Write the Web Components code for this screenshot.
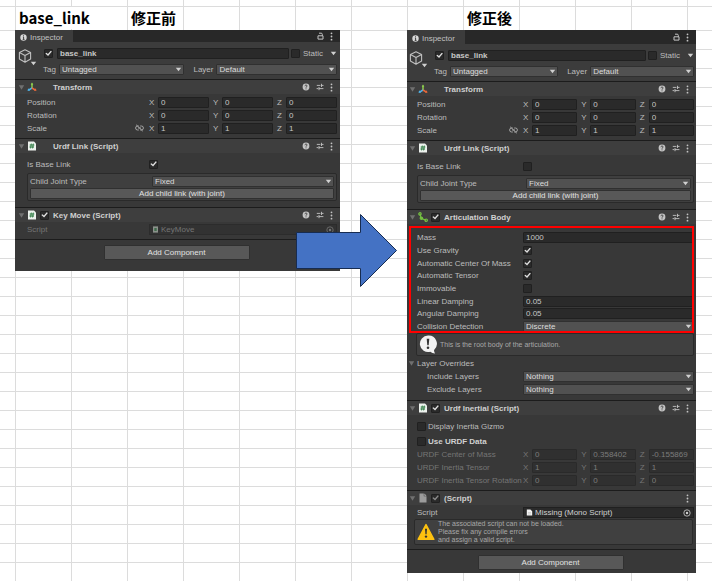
<!DOCTYPE html>
<html lang="ja">
<head>
<meta charset="utf-8">
<title>base_link</title>
<style>
  html, body { margin: 0; min-height: 100%; }
  body { background: #fff; }
  .before { --label: 122px; --tab: 12px; --inset: 12px; --edge: 3px; --lead: 3px; --foot: 11px; }
  .after { --label: 106px; --tab: 14px; --inset: 10px; --edge: 2px; --lead: 2px; --foot: 3px; }
</style>
</head>
<body>
<sheet-page>
  <sheet-heading slot="before"><span>base_link</span><span slot="note">修正前</span></sheet-heading>
  <sheet-heading slot="after"><span slot="note">修正後</span></sheet-heading>

  <inspector-panel slot="left" class="before">
    <object-header></object-header>
    <component-section icon="axes" heading="Transform" tools class="transform">
      <vector-row label="Position" x="0" y="0" z="0"></vector-row>
      <vector-row label="Rotation" x="0" y="0" z="0"></vector-row>
      <vector-row label="Scale" x="1" y="1" z="1" linked></vector-row>
    </component-section>
    <component-section icon="script" heading="Urdf Link (Script)" tools class="link">
      <property-row kind="check" label="Is Base Link" checked></property-row>
      <joint-box></joint-box>
    </component-section>
    <component-section icon="script" heading="Key Move (Script)" toggle="on" tools class="script">
      <property-row kind="object" label="Script" value="KeyMove" glyph="scriptSmall" disabled></property-row>
    </component-section>
    <add-component></add-component>
  </inspector-panel>

  <block-arrow slot="middle"></block-arrow>

  <inspector-panel slot="right" class="after">
    <object-header></object-header>
    <component-section icon="axes" heading="Transform" tools class="transform">
      <vector-row label="Position" x="0" y="0" z="0"></vector-row>
      <vector-row label="Rotation" x="0" y="0" z="0"></vector-row>
      <vector-row label="Scale" x="1" y="1" z="1" linked></vector-row>
    </component-section>
    <component-section icon="script" heading="Urdf Link (Script)" tools class="link">
      <property-row kind="check" label="Is Base Link"></property-row>
      <joint-box></joint-box>
    </component-section>
    <component-section icon="joint" heading="Articulation Body" toggle="on" tools class="body">
      <marked-rows>
        <property-row kind="text" label="Mass" value="1000"></property-row>
        <property-row kind="check" label="Use Gravity" checked></property-row>
        <property-row kind="check" label="Automatic Center Of Mass" checked></property-row>
        <property-row kind="check" label="Automatic Tensor" checked></property-row>
        <property-row kind="check" label="Immovable"></property-row>
        <property-row kind="text" label="Linear Damping" value="0.05"></property-row>
        <property-row kind="text" label="Angular Damping" value="0.05"></property-row>
        <property-row kind="select" label="Collision Detection" value="Discrete"></property-row>
      </marked-rows>
      <help-box icon="info" class="info">This is the root body of the articulation.</help-box>
      <foldout-group label="Layer Overrides">
        <property-row kind="select" label="Include Layers" value="Nothing"></property-row>
        <property-row kind="select" label="Exclude Layers" value="Nothing"></property-row>
      </foldout-group>
    </component-section>
    <component-section icon="script" heading="Urdf Inertial (Script)" toggle="on" tools class="inertial">
      <property-row kind="leading" label="Display Inertia Gizmo"></property-row>
      <property-row kind="leading" label="Use URDF Data" strong></property-row>
      <vector-row label="URDF Center of Mass" x="0" y="0.358402" z="-0.155869" disabled></vector-row>
      <vector-row label="URDF Inertia Tensor" x="1" y="1" z="1" disabled></vector-row>
      <vector-row label="URDF Inertia Tensor Rotation" x="0" y="0" z="0" disabled></vector-row>
    </component-section>
    <component-section icon="page" heading="(Script)" toggle="disabled" class="missing">
      <property-row kind="object" label="Script" value="Missing (Mono Script)" glyph="pageSmall"></property-row>
      <help-box icon="warning" class="warning">The associated script can not be loaded.<br>Please fix any compile errors<br>and assign a valid script.</help-box>
    </component-section>
    <add-component></add-component>
  </inspector-panel>
</sheet-page>

<script>
const ICONS = {
  fold: '<svg width="7" height="7" viewBox="0 0 7 7"><path d="M.8 1.2h5.4L3.5 5.8z" fill="#707070"/></svg>',
  caret: '<svg width="7" height="5" viewBox="0 0 7 5"><path d="M.8.7h5.4L3.5 4.2z" fill="#d0d0d0"/></svg>',
  dots: '<svg width="3" height="9" viewBox="0 0 3 9" fill="#c4c4c4"><circle cx="1.5" cy="1.3" r=".9"/><circle cx="1.5" cy="4.5" r=".9"/><circle cx="1.5" cy="7.7" r=".9"/></svg>',
  help: '<svg width="8" height="8" viewBox="0 0 8 8"><circle cx="4" cy="4" r="3.4" fill="#c4c4c4"/><path d="M2.9 3.2c0-1.5 2.2-1.5 2.2-.2C5.1 3.8 4 3.7 4 4.7M4 5.4v.9" fill="none" stroke="#383838" stroke-width=".9"/></svg>',
  preset: '<svg width="8" height="8" viewBox="0 0 8 8" fill="none" stroke="#c4c4c4" stroke-width=".9"><path d="M.8 2.4h3.6M5.5.8v3.2M5.5 2.4h2M.6 5.6h1.7M3 4v3.2M3 5.6h4.4"/></svg>',
  lock: '<svg width="7" height="8" viewBox="0 0 7 8"><path d="M1 3.8h5v3.3H1zM2 1.2h2.2Q5.3 1.2 5.3 2.4v1.4" fill="none" stroke="#c4c4c4"/></svg>',
  infoTab: '<svg width="7" height="7" viewBox="0 0 7 7"><circle cx="3.5" cy="3.5" r="3.2" fill="#d8d8d8"/><path d="M3.5 1.3v1M2.9 3h.7v2.4M2.7 5.4h1.8" fill="none" stroke="#333" stroke-width=".9"/></svg>',
  cube: '<svg width="14" height="14" viewBox="0 0 14 14" fill="none" stroke="#c0c0c0" stroke-width="1.1" stroke-linejoin="round"><path d="M7 .8l5.6 2.7v6.6L7 13.2 1.4 10.1V3.5zM1.4 3.5L7 6.5l5.6-3M7 6.5v6.7"/></svg>',
  axes: '<svg width="10" height="10" viewBox="0 0 10 10" fill="none" stroke-width="1.5"><path d="M5 6V1.5" stroke="#8fd14f"/><path d="M5 6L1.6 8.2" stroke="#4fb3e8"/><path d="M5 6l3.4 2.2" stroke="#e8683a"/><path d="M3.7 2.8L5 .4l1.3 2.4z" fill="#8fd14f"/><path d="M.6 9l.5-2.8 2 2.4z" fill="#4fb3e8"/><path d="M9.400 9l-.5-2.800-2 2.400z" fill="#e8683a"/></svg>',
  script: '<svg width="10" height="10" viewBox="0 0 10 10"><path d="M1 .5h6L9 2.500v7H1z" fill="#eef2ee"/><path d="M4.300 2.600L3.600 7.400M6.300 2.600L5.600 7.400M2.700 4h4.600M2.400 6H7" stroke="#2c7a42" fill="none" stroke-width=".95"/></svg>',
  joint: '<svg width="10" height="10" viewBox="0 0 10 10" fill="none" stroke="#76c442" stroke-width="1.2"><path d="M2 2l1.200 4.300L8 8.200"/><circle cx="2" cy="1.900" r="1.200"/><circle cx="3.400" cy="6.300" r="1.200"/><circle cx="8.200" cy="8.200" r="1.200"/></svg>',
  page: '<svg width="10" height="10" viewBox="0 0 10 10"><path d="M1.500.5h4.300v2.700h2.700v6.300h-7z" fill="#9b9b9b"/><path d="M6.400.6l2.100 2.100H6.400z" fill="#b8b8b8"/></svg>',
  scriptSmall: '<svg width="7" height="7" viewBox="0 0 7 7"><path d="M1 .4h5v6.200H1z" fill="#8b918b"/><path d="M2.300 2h2.400v3H2.300z" fill="#3f6a4b"/></svg>',
  pageSmall: '<svg width="7" height="7" viewBox="0 0 7 7"><path d="M.8.4h3.600l1.800 1.800v4.400H.8z" fill="#f2f2f2"/><path d="M2 3.600h3M2 5h3" stroke="#aaa" stroke-width=".5"/></svg>',
  picker: '<svg width="8" height="8" viewBox="0 0 8 8"><circle cx="4" cy="4" r="3.200" fill="none" stroke="currentColor" stroke-width=".8"/><circle cx="4" cy="4" r="1.200" fill="currentColor"/></svg>',
  unlink: '<svg width="9" height="8" viewBox="0 0 9 8" fill="none" stroke="#b0b0b0" stroke-width=".9"><path d="M3.800 2H2.600a2 2 0 0 0 0 4h1.200M5.200 2h1.200a2 2 0 0 1 0 4H5.200M3 4h3M1.200.8l6.600 6.400"/></svg>',
  info: '<svg width="18" height="19" viewBox="0 0 18 19"><path d="M9 .6a8.200 8.200 0 1 0 2.300 16.100q1.800 1.600 4.800 1.700-1.300-1.600-1-3.500A8.200 8.200 0 0 0 9 .6z" fill="#f2f2f2"/><path d="M7.700 3.700h2.600L9.700 10.300H8.300z" fill="#333"/><circle cx="9" cy="12.700" r="1.300" fill="#333"/></svg>',
  warning: '<svg width="18" height="18" viewBox="0 0 18 18"><path d="M9 1.500L16.900 16.300H1.100z" fill="#fdc110" stroke="#fdc110" stroke-width="1.400" stroke-linejoin="round"/><path d="M8 5.700h2L9.600 11.300H8.400z" fill="#333"/><circle cx="9" cy="13.600" r="1.200" fill="#333"/></svg>'
};

const BASE = `
  *, *::before, *::after { box-sizing: border-box; }
  :host { box-sizing: border-box; }
  svg { display: block; flex: none; }
  button, input, select { font: inherit; color: inherit; margin: 0; min-width: 0; border-radius: 1px; }
  label { white-space: nowrap; }
  .plain { display: grid; place-items: center; padding: 0; border: 0; background: none; }
  .field { width: 100%; height: 11px; padding: 0 2px; border: 1px solid #202020; background: #2a2a2a; color: #c6c6c6; line-height: 9px; }
  .field:disabled { color: #7c7c7c; background: #303030; border-color: #2a2a2a; }
  input[type=checkbox] { appearance: none; display: grid; place-items: center; flex: none; width: 9px; height: 9px; border: 1px solid #202020; background: #2a2a2a; }
  input[type=checkbox]:checked::before { content: ""; width: 7px; height: 6px; background: #dedede; clip-path: polygon(5% 52%, 20% 36%, 42% 60%, 82% 4%, 98% 18%, 44% 92%); }
  input[type=checkbox]:disabled::before { background: #8b8b8b; }
  .drop { display: grid; align-items: center; min-width: 0; }
  .drop > * { grid-area: 1 / 1; }
  .drop svg { justify-self: end; margin-right: 2px; pointer-events: none; }
  select { appearance: none; width: 100%; height: 11px; padding: 0 9px 0 2px; border: 1px solid #303030; background: #515151; color: #dcdcdc; line-height: 9px; }
  .push { border: 1px solid #303030; background: #585858; color: #e2e2e2; padding: 0; }
`;

let serial = 0;
function define(name, css, render) {
  customElements.define(name, class extends HTMLElement {
    connectedCallback() {
      if (this.shadowRoot) return;
      const root = this.attachShadow({ mode: 'open' });
      root.innerHTML = `<style>${BASE}${css}</style>${render(this, 'f' + (++serial))}`;
    }
  });
}
const attr = (el, n) => el.getAttribute(n) || '';
const drop = (id, value) => `<span class="drop"><select id="${id}"><option>${value}</option></select>${ICONS.caret}</span>`;

define('sheet-page', `
  :host { display: grid; grid-template-columns: 325fr 67fr 289fr; grid-template-rows: 30px auto; align-items: start;
    min-height: 100vh; padding: 0 16px 8px 15px; font: 8px/11px "Liberation Sans", Arial, sans-serif; color: #bcbcbc;
    background-color: #fff;
    background-image: linear-gradient(#dcdcdc 1px, transparent 1px), linear-gradient(90deg, #dcdcdc 1px, transparent 1px);
    background-size: 100% 19px, 56px 100%;
    background-position: 0 11px, 15px 0; }
  .top { grid-column: 1 / -1; display: grid; grid-template-columns: subgrid; align-self: stretch;
    margin: 0 -16px 0 -15px; padding: 0 16px 0 15px; }
  .top::before { content: ""; grid-area: 1 / 1 / 2 / -1; height: 24px; margin: 6px -16px 0 -15px; border-top: 1px solid #dcdcdc;
    background: linear-gradient(90deg, #dcdcdc 1px, #fff 1px) 15px 0 / 56px 100%; }
  .a { grid-area: 1 / 1; } .b { grid-area: 1 / 3; }
`, () => `<header class="top"><div class="a"><slot name="before"></slot></div><div class="b"><slot name="after"></slot></div></header>
  <slot name="left"></slot><slot name="middle"></slot><slot name="right"></slot>`);

define('sheet-heading', `
  :host { display: grid; grid-template-columns: 56px 56px; padding-top: 7px; color: #000;
    font: 700 15px/22px "Noto Sans CJK JP", sans-serif; white-space: nowrap; }
  .name { grid-area: 1 / 1 / 2 / 3; margin: 0 0 0 1px; padding-left: 3px; background: #fff; }
  .note { grid-area: 1 / 3; padding-left: 4px; }
  :host([slot=after]) { grid-template-columns: 56px; }
  :host([slot=after]) .note { grid-area: 1 / 2; }
  :host([slot=after]) .name { display: none; }
`, () => `<div class="name"><slot></slot></div><div class="note"><slot name="note"></slot></div>`);

define('inspector-panel', `
  :host { display: block; background: #383838; min-width: 0; }
  .tabs { display: flex; align-items: stretch; height: var(--tab); background: #282828; padding-right: 7px; }
  .tab { display: flex; align-items: center; gap: 3px; width: 58px; padding: 2px 0 0 5px; background: #3c3c3c; color: #c0c0c0; }
  .space { flex: 1; }
  .tools { display: flex; align-items: center; gap: 6px; }
`, () => `<div class="tabs"><div class="tab">${ICONS.infoTab}<span>Inspector</span></div><span class="space"></span>
  <div class="tools"><button class="plain" aria-label="Lock">${ICONS.lock}</button><button class="plain" aria-label="Menu">${ICONS.dots}</button></div></div><slot></slot>`);

define('object-header', `
  :host { display: grid; grid-template-columns: 24px 1fr; padding: 6px var(--edge) 4px var(--lead); background: #3c3c3c; }
  .pic { display: grid; grid-template-columns: 14px 7px; align-content: start; padding-top: 1px; }
  .pic svg:last-child { grid-column: 2; margin: 12px 0 0 -2px; }
  .rows { display: grid; gap: 5px; min-width: 0; }
  .row { display: flex; align-items: center; height: 11px; gap: 2px; }
  .one input[type=checkbox] { margin-left: 2px; }
  .one #static { margin-left: 0; }
  .name { flex: 1; font-weight: 700; margin-left: 2px; }
  .one label { margin: 0 5px 0 1px; }
  .one .plain { width: 7px; }
  .two { display: grid; grid-template-columns: 14px 126fr 26px 121fr; gap: 3px; }
  .two label { text-align: right; }
  .two label:first-child { margin-left: -2px; }
`, (el, id) => `<div class="pic">${ICONS.cube}${ICONS.caret}</div><div class="rows">
  <div class="row one"><input type="checkbox" checked aria-label="Active"><input class="field name" aria-label="Name" value="base_link">
  <input type="checkbox" id="static"><label for="static">Static</label><button class="plain" aria-label="Static options">${ICONS.caret}</button></div>
  <div class="row two"><label for="${id}t">Tag</label>${drop(id + 't', 'Untagged')}<label for="${id}l">Layer</label>${drop(id + 'l', 'Default')}</div></div>`);

define('component-section', `
  :host { display: block; border-top: 1px solid #1c1c1c; }
  header { display: flex; align-items: center; height: 14px; padding: 0 7px 0 var(--lead); background: #3e3e3e; }
  .fold { width: 7px; margin-right: 2px; }
  .slot { display: grid; place-items: center; width: 9px; margin: 0 4px 0 3px; }
  h2 { flex: 1; margin: 0; font: inherit; font-weight: 700; color: #d0d0d0; white-space: nowrap; }
  .tools { display: flex; align-items: center; gap: 6px; }
  .rows { display: grid; grid-template-columns: minmax(0, 1fr); grid-auto-rows: 13px 13px 12px; padding: 2px var(--edge) 4px var(--inset); }
  :host(.link) .rows { grid-auto-rows: auto; padding-top: 5px; padding-bottom: 6px; row-gap: 3px; }
  :host(.script) .rows { padding-top: 1px; padding-bottom: 3px; }
  :host(.body) .rows { grid-auto-rows: auto; padding-top: 7px; padding-bottom: 5px; }
  :host(.inertial) .rows { grid-template-rows: 15px 14px; padding-top: 4px; }
  :host(.missing) .rows { grid-auto-rows: auto; padding-top: 1px; }
`, el => {
  const t = attr(el, 'toggle');
  const box = t ? `<input type="checkbox" aria-label="Enabled" checked ${t === 'disabled' ? 'disabled' : ''}>` : '';
  const extra = el.hasAttribute('tools') ? `<button class="plain" aria-label="Help">${ICONS.help}</button><button class="plain" aria-label="Presets">${ICONS.preset}</button>` : '';
  return `<header><button class="plain fold" aria-label="Collapse" aria-expanded="true">${ICONS.fold}</button>${ICONS[attr(el, 'icon')]}
    <span class="slot">${box}</span><h2>${attr(el, 'heading')}</h2><div class="tools">${extra}<button class="plain" aria-label="Menu">${ICONS.dots}</button></div></header>
    <div class="rows"><slot></slot></div>`;
});

define('property-row', `
  :host { display: grid; grid-template-columns: var(--label) minmax(0, 1fr); align-items: center; min-height: 12px; }
  :host([kind=object]) { min-height: 13px; }
  :host([kind=leading]) { grid-template-columns: 9px 1fr; column-gap: 2px; }
  :host([strong]) { font-weight: 700; color: #d0d0d0; }
  :host([disabled]) { color: #757575; }
  .obj { display: flex; align-items: center; gap: 2px; height: 11px; padding: 0 2px; border: 1px solid #202020; background: #2a2a2a; color: #d0d0d0; }
  .obj input { flex: 1; height: 9px; padding: 0; border: 0; background: none; color: inherit; line-height: 9px; }
  :host([disabled]) .obj { color: #757575; background: #323232; border-color: #2c2c2c; }
`, (el, id) => {
  const label = `<label for="${id}">${attr(el, 'label')}</label>`;
  const check = `<input type="checkbox" id="${id}" ${el.hasAttribute('checked') ? 'checked' : ''}>`;
  const off = el.hasAttribute('disabled') ? 'disabled' : '';
  switch (attr(el, 'kind')) {
    case 'leading': return check + label;
    case 'check': return label + check;
    case 'select': return label + drop(id, attr(el, 'value'));
    case 'object': return `${label}<div class="obj">${ICONS[attr(el, 'glyph')]}<input id="${id}" value="${attr(el, 'value')}" ${off} readonly><button class="plain" aria-label="Pick" ${off}>${ICONS.picker}</button></div>`;
    default: return `${label}<input class="field" id="${id}" value="${attr(el, 'value')}">`;
  }
});

define('vector-row', `
  :host { display: grid; grid-template-columns: var(--label) minmax(0, 1fr); align-items: center; }
  :host([disabled]) { color: #757575; }
  .name { display: flex; align-items: center; justify-content: space-between; padding-right: 5px; white-space: nowrap; }
  .axes { display: grid; grid-template-columns: repeat(3, minmax(0, 1fr)); column-gap: 4px; }
  .axes label { display: grid; grid-template-columns: 9px minmax(0, 1fr); align-items: center; }
`, el => `<div class="name"><span>${attr(el, 'label')}</span>${el.hasAttribute('linked') ? `<button class="plain" aria-label="Link scale">${ICONS.unlink}</button>` : ''}</div>
  <div class="axes">${['x', 'y', 'z'].map(a => `<label>${a.toUpperCase()}<input class="field" value="${attr(el, a)}" ${el.hasAttribute('disabled') ? 'disabled' : ''}></label>`).join('')}</div>`);

define('joint-box', `
  :host { display: grid; gap: 1px; padding: 1px 2px; border: 1px solid #2a2a2a; border-radius: 2px; background: #3f3f3f; }
  .row { display: grid; grid-template-columns: var(--label) minmax(0, 1fr); align-items: center; height: 12px; }
  .push { height: 11px; line-height: 9px; }
`, (el, id) => `<div class="row"><label for="${id}">Child Joint Type</label>${drop(id, 'Fixed')}</div><button class="push">Add child link (with joint)</button>`);

define('marked-rows', `
  :host { display: grid; position: relative; grid-auto-rows: 13px 13px 12px; }
  :host::after { content: ""; position: absolute; inset: -5px 0 0 -8px; border: 2px solid #f00; pointer-events: none; z-index: 1; }
`, () => `<slot></slot>`);

define('help-box', `
  :host { display: flex; align-items: center; gap: 3px; border: 1px solid #2a2a2a; border-radius: 2px; background: #404040; color: #a8a8a8; font-size: 7px; line-height: 8px; }
  :host(.info) { height: 23px; margin-left: -1px; padding-left: 2px; }
  :host(.warning) { height: 26px; margin: 0 1px 0 -3px; padding-left: 2px; }
`, el => `${ICONS[attr(el, 'icon')]}<div><slot></slot></div>`);

define('foldout-group', `
  :host { display: grid; grid-auto-rows: 13px 13px 12px; padding-top: 1px; }
  .head { display: flex; align-items: center; margin-left: -9px; padding: 0; gap: 2px; border: 0; background: none; }
  ::slotted(property-row) { --label: 96px; margin-left: 10px; }
`, el => `<button class="head" aria-expanded="true">${ICONS.fold}<span>${attr(el, 'label')}</span></button><slot></slot>`);

define('add-component', `
  :host { display: grid; justify-items: center; padding: 5px 2px var(--foot) 0; border-top: 1px solid #1c1c1c; }
  .push { width: 146px; height: 15px; line-height: 13px; }
`, () => `<button class="push">Add Component</button>`);

define('block-arrow', `
  :host { display: block; position: relative; }
  svg { position: absolute; top: 183px; left: -44px; width: calc(100% + 34px); height: 75px; z-index: 2; }
`, () => `<svg viewBox="0 0 101 75" preserveAspectRatio="none"><path d="M.5 19.500h64V1.500L100.500 37.500 64.500 73.500V55.500H.5z" fill="#4472c4" stroke="#172c51"/></svg>`);
</script>
</body>
</html>
